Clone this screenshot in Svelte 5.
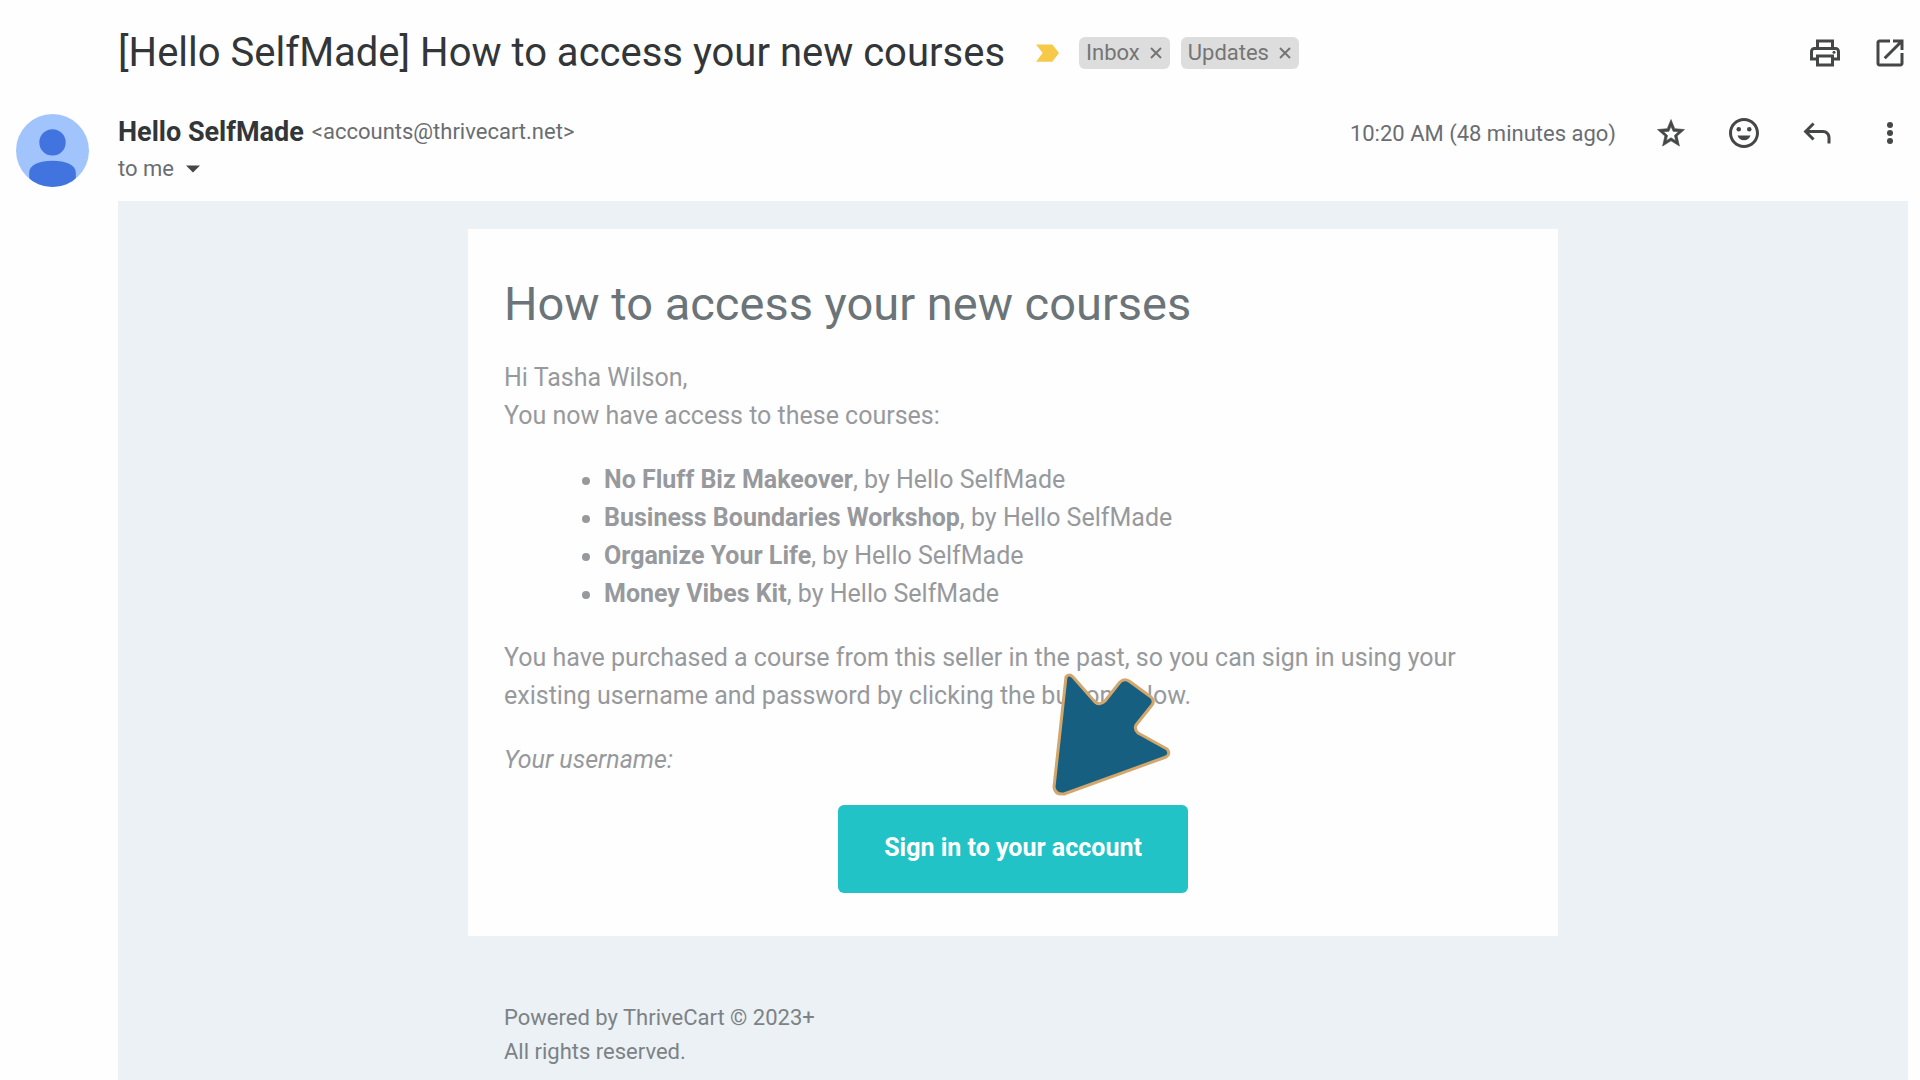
<script>
  const subject = "[Hello SelfMade] How to access your new courses";
  const sender = { name: "Hello SelfMade", email: "accounts@thrivecart.net" };
  let labels = ["Inbox", "Updates"];

  const courses = [
    "No Fluff Biz Makeover",
    "Business Boundaries Workshop",
    "Organize Your Life",
    "Money Vibes Kit",
  ];

  function removeLabel(label) {
    labels = labels.filter((l) => l !== label);
  }
</script>

<main class="message">
  <!-- Subject line -->
  <header class="subject-row">
    <h1>{subject}</h1>
    <svg class="important" viewBox="0 0 24 18" aria-hidden="true">
      <path d="M0 0h17l7 9-7 9H0l7-9z" fill="#f7c948" />
    </svg>
    <div class="labels">
      {#each labels as label}
        <span class="label">
          {label}
          <button aria-label="Remove label {label}" on:click={() => removeLabel(label)}>
            <svg viewBox="0 0 12 12"><path d="M1 1l10 10M11 1L1 11" stroke="currentColor" stroke-width="2" /></svg>
          </button>
        </span>
      {/each}
    </div>
    <div class="actions">
      <button class="icon-btn" aria-label="Print all">
        <svg viewBox="0 0 24 24"><path d="M19 8h-1V3H6v5H5c-1.66 0-3 1.34-3 3v6h4v4h12v-4h4v-6c0-1.66-1.34-3-3-3zM8 5h8v3H8V5zm8 12v2H8v-4h8v2zm2-2v-2H6v2H4v-4c0-.55.45-1 1-1h14c.55 0 1 .45 1 1v4h-2z" /><circle cx="18" cy="11.500" r="1" /></svg>
      </button>
      <button class="icon-btn" aria-label="Open in new window">
        <svg viewBox="0 0 24 24"><path d="M19 19H5V5h7V3H5c-1.110 0-2 .9-2 2v14c0 1.100.890 2 2 2h14c1.100 0 2-.9 2-2v-7h-2v7zM14 3v2h3.590l-9.830 9.830 1.410 1.410L19 6.410V10h2V3h-7z" /></svg>
      </button>
    </div>
  </header>

  <!-- Sender, date and message buttons -->
  <section class="sender-row">
    <svg class="avatar" viewBox="0 0 72 72" aria-hidden="true">
      <defs>
        <clipPath id="avatar-clip"><circle cx="36" cy="36" r="36" /></clipPath>
      </defs>
      <g clip-path="url(#avatar-clip)">
        <rect width="72" height="72" fill="#a1c4fd" />
        <circle cx="36" cy="28" r="13" fill="#4274e0" />
        <path d="M13 58c0-8 10-12 23-12s23 4 23 12v14H13z" fill="#4274e0" />
      </g>
    </svg>
    <div class="sender">
      <div class="from">
        <strong>{sender.name}</strong>
        <span>&lt;{sender.email}&gt;</span>
      </div>
      <button class="to">
        to me
        <svg viewBox="0 0 14 7" aria-hidden="true"><path d="M0 0h14L7 7z" fill="#444746" /></svg>
      </button>
    </div>
    <div class="actions">
      <time>10:20 AM (48 minutes ago)</time>
      <button class="icon-btn" aria-label="Star">
        <svg viewBox="0 0 24 24"><path stroke="#444746" stroke-width=".4" d="M21 9.700l-6.500-.6L12 3 9.500 9.100 3 9.700l4.900 4.300L6.400 20.700 12 17.200l5.600 3.500L16.100 14 21 9.700zM12 15.200l-3.100 1.900.8-3.500-2.700-2.400 3.600-.3L12 7.500l1.400 3.400 3.600.3-2.700 2.400.8 3.500z" /></svg>
      </button>
      <button class="icon-btn" aria-label="Add reaction">
        <svg viewBox="0 0 24 24"><path d="M12 2C6.480 2 2 6.480 2 12s4.480 10 10 10 10-4.480 10-10S17.520 2 12 2zm0 18c-4.420 0-8-3.580-8-8s3.580-8 8-8 8 3.580 8 8-3.580 8-8 8zM7.700 13.600h8.600c-.6 2-2.200 3.200-4.300 3.200s-3.700-1.200-4.300-3.200z" /><circle cx="8.500" cy="9.500" r="1.500" /><circle cx="15.500" cy="9.500" r="1.500" /></svg>
      </button>
      <button class="icon-btn" aria-label="Reply">
        <svg viewBox="0 0 24 24"><path d="M19 19v-4c0-1.650-1.350-3-3-3H6.830l3.580 3.590L9 17l-6-6 6-6 1.410 1.410L6.830 10H16c2.760 0 5 2.240 5 5v4h-2z" /></svg>
      </button>
      <button class="icon-btn" aria-label="More">
        <svg viewBox="0 0 24 24"><circle cx="12" cy="6.600" r="2" /><circle cx="12" cy="12" r="2" /><circle cx="12" cy="17.400" r="2" /></svg>
      </button>
    </div>
  </section>

  <!-- Email body -->
  <div class="mail">
    <article class="card">
      <h2>How to access your new courses</h2>
      <p>Hi Tasha Wilson,<br />You now have access to these courses:</p>
      <ul>
        {#each courses as course}
          <li><strong>{course}</strong>, by Hello SelfMade</li>
        {/each}
      </ul>
      <p>
        You have purchased a course from this seller in the past, so you can sign in using your
        existing username and password by clicking the button below.
      </p>
      <p><em>Your username:</em></p>
      <div class="cta">
        <a href="#signin">Sign in to your account</a>
        <svg class="pointer" viewBox="0 0 120 124" aria-hidden="true">
          <path
            d="M14 4Q17 0 21 4L43 29Q48 33 53 28L68 9Q72 5 77 8L99 24Q103 28 100 32L84 52Q82 56 86 60L115 76Q119 81 114 84L12 121Q3 122 2 114Z"
            fill="#175f80"
            stroke="#d3a66c"
            stroke-width="3"
            stroke-linejoin="round"
          />
        </svg>
      </div>
    </article>
    <footer>
      Powered by ThriveCart © 2023+<br />
      All rights reserved.
    </footer>
  </div>
</main>

<style>
:global(body) {
  margin: 0;
  background: #fefefe;
}

.message {
  display: flex;
  flex-direction: column;
  min-height: 100vh;
  box-sizing: border-box;
  overflow: hidden;
  padding-right: 12px;
  font-family: Roboto, "Liberation Sans", sans-serif;
  color: #6a6d71;
}

button {
  padding: 0;
  border: none;
  background: none;
  font: inherit;
  color: inherit;
  cursor: pointer;
}

svg {
  display: block;
}

/* Subject line */
.subject-row {
  display: flex;
  align-items: center;
  height: 106px;
  padding-left: 118px;
}

h1 {
  margin: 0;
  font-size: 40px;
  line-height: 48px;
  font-weight: 400;
  color: #333639;
}

.important {
  width: 23px;
  height: 18px;
  margin: 0 20px 0 31px;
}

.labels {
  display: flex;
  gap: 11px;
}

.label {
  display: flex;
  align-items: center;
  gap: 10px;
  padding: 0 8px 0 7px;
  border-radius: 6px;
  background: #dddddd;
  font-size: 22px;
  line-height: 32px;
  color: #757575;
}

.label svg {
  width: 12px;
  height: 12px;
}

.actions {
  display: flex;
  align-items: center;
  gap: 37px;
  margin-left: auto;
}

.subject-row .actions {
  gap: 29px;
}

.icon-btn svg {
  width: 36px;
  height: 36px;
  fill: #444746;
}

/* Sender */
.sender-row {
  display: flex;
  align-items: flex-start;
  height: 95px;
}

.avatar {
  width: 73px;
  height: 73px;
  margin: 8px 29px 0 16px;
}

.sender {
  padding-top: 9px;
}

.from {
  display: flex;
  align-items: center;
  gap: 8px;
  font-size: 22px;
  line-height: 34px;
}

.from strong {
  font-size: 27px;
  color: #333639;
}

.to {
  display: flex;
  align-items: center;
  gap: 12px;
  font-size: 22px;
  line-height: 40px;
}

.to svg {
  width: 14px;
  height: 8px;
}

.sender-row .actions {
  padding-top: 9px;
}

time {
  font-size: 22px;
}

/* Email body */
.mail {
  flex: 1;
  margin-left: 118px;
  padding: 28px 0 0;
  background: #ebf1f4;
}

.card,
footer {
  width: 100%;
  max-width: 1090px;
  box-sizing: border-box;
  margin: 0 auto;
  padding: 0 36px;
}

.card {
  padding-top: 41px;
  padding-bottom: 43px;
  background: #fefefe;
  font-size: 25px;
  line-height: 38px;
  color: #97999d;
}

h2 {
  margin: 0 0 21px;
  font-size: 47px;
  line-height: 68px;
  font-weight: 400;
  color: #6b7478;
}

.card p {
  margin: 0 0 26px;
}

ul {
  margin: 0 0 26px;
  padding-left: 100px;
}

.cta {
  position: relative;
  width: max-content;
  margin: 0 auto;
}

.cta a {
  display: block;
  padding: 24px 46px 26px;
  border-radius: 6px;
  background: #22c3c6;
  font-weight: 700;
  color: #fff;
  text-decoration: none;
}

/* Arrow over the text, aimed at the button */
.pointer {
  position: absolute;
  left: 214px;
  bottom: 96px;
  width: 120px;
  height: 124px;
}

footer {
  padding-top: 65px;
  font-size: 22px;
  line-height: 34px;
  color: #7c8286;
}
</style>
